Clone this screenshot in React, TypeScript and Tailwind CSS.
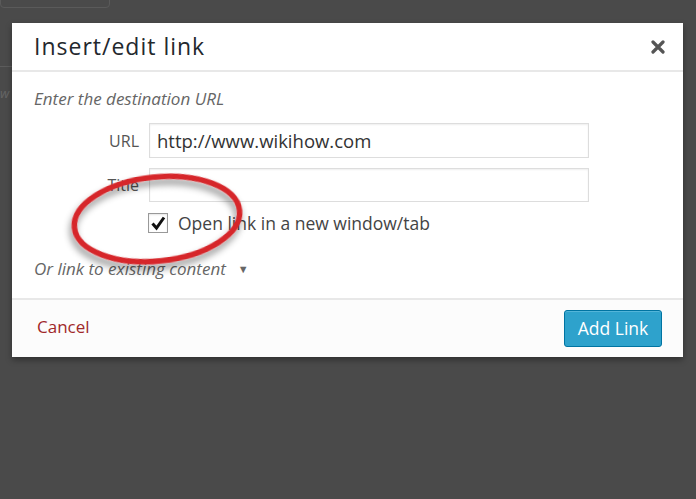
const App = () => {
  return (
    <div
      className="relative w-[696px] h-[499px] overflow-hidden bg-[#4a4a4a]"
      style={{ fontFamily: '"Open Sans", "Liberation Sans", sans-serif' }}
    >
      {/* faint editor chrome behind the overlay */}
      <div className="absolute left-0 top-[-4px] w-[110px] h-[12px] border border-[#5a5a5a] rounded-sm" />
      <div className="absolute left-0 top-[66px] w-[12px] h-px bg-[#5c5c5c]" />
      <div className="absolute left-0 top-[84px] text-[13px] italic text-[#666]">w</div>

      <div className="absolute left-[12px] top-[23px] w-[671px] h-[334px] bg-white shadow-[0_3px_6px_rgba(0,0,0,0.35)] flex flex-col">
        <div className="h-[49px] flex items-center justify-between pl-[22px] pr-[18px] border-b-2 border-[#e8e8e8]">
          <h1 className="text-[23px] tracking-[1px] text-[#23282d] leading-none">Insert/edit link</h1>
          <svg width="14" height="14" viewBox="0 0 14 14">
            <path d="M2 2 L12 12 M12 2 L2 12" stroke="#555" strokeWidth="3.2" strokeLinecap="round" />
          </svg>
        </div>

        <div className="flex-1 flex flex-col pl-[22px] pr-[94px] pt-[16px]">
          <p className="text-[17px] italic text-[#666] leading-[22px]">Enter the destination URL</p>
          <div className="flex items-center mt-[13px] gap-[10px]">
            <label className="w-[105px] text-right text-[16px] text-[#555]">URL</label>
            <div className="flex-1 h-[35px] border border-[#ddd] shadow-[inset_0_1px_2px_rgba(0,0,0,0.07)] flex items-center px-[7px] text-[18.5px] text-[#333]">
              http://www.wikihow.com
            </div>
          </div>
          <div className="flex items-center mt-[10px] gap-[10px]">
            <label className="w-[105px] text-right text-[16px] text-[#555]">Title</label>
            <div className="flex-1 h-[34px] border border-[#ddd] shadow-[inset_0_1px_2px_rgba(0,0,0,0.07)]" />
          </div>
          <div className="flex items-center mt-[10px] pl-[114px] gap-[10px]">
            <div className="w-[20px] h-[20px] border border-[#999] bg-white flex items-center justify-center shadow-[inset_0_1px_2px_rgba(0,0,0,0.1)]">
              <svg width="16" height="16" viewBox="0 0 16 16">
                <path d="M2.5 8.5 L6.5 13 L14 2.5" fill="none" stroke="#111" strokeWidth="3" strokeLinejoin="miter" />
              </svg>
            </div>
            <span className="text-[17.5px] text-[#444] leading-[22px]">Open link in a new window/tab</span>
          </div>
          <div className="flex items-center mt-[24px] gap-[12px]">
            <span className="text-[17px] italic text-[#666] leading-[22px]">Or link to existing content</span>
            <span className="text-[11px] text-[#666]">▼</span>
          </div>
        </div>

        <div className="h-[59px] border-t-2 border-[#e8e8e8] bg-[#fcfcfc] flex items-center justify-between pl-[25px] pr-[21px]">
          <span className="text-[17px] text-[#a0282a] -mt-[3px]">Cancel</span>
          <button className="w-[98px] h-[37px] rounded-[3px] bg-[#2ea2cc] border border-[#0074a2] text-white text-[17.5px] shadow-[inset_0_1px_0_rgba(120,200,230,0.5)]">
            Add Link
          </button>
        </div>
      </div>

      <svg className="absolute left-0 top-0" width="696" height="499" viewBox="0 0 696 499">
        <defs>
          <filter id="sh" x="-20%" y="-40%" width="140%" height="180%">
            <feDropShadow dx="-2" dy="5" stdDeviation="3.5" floodColor="#000" floodOpacity="0.45" />
          </filter>
        </defs>
        <ellipse
          cx="157"
          cy="219"
          rx="83"
          ry="42"
          transform="rotate(-6 157 219)"
          fill="none"
          stroke="#d6262b"
          strokeWidth="5.5"
          filter="url(#sh)"
        />
      </svg>
    </div>
  );
};

export default App;
